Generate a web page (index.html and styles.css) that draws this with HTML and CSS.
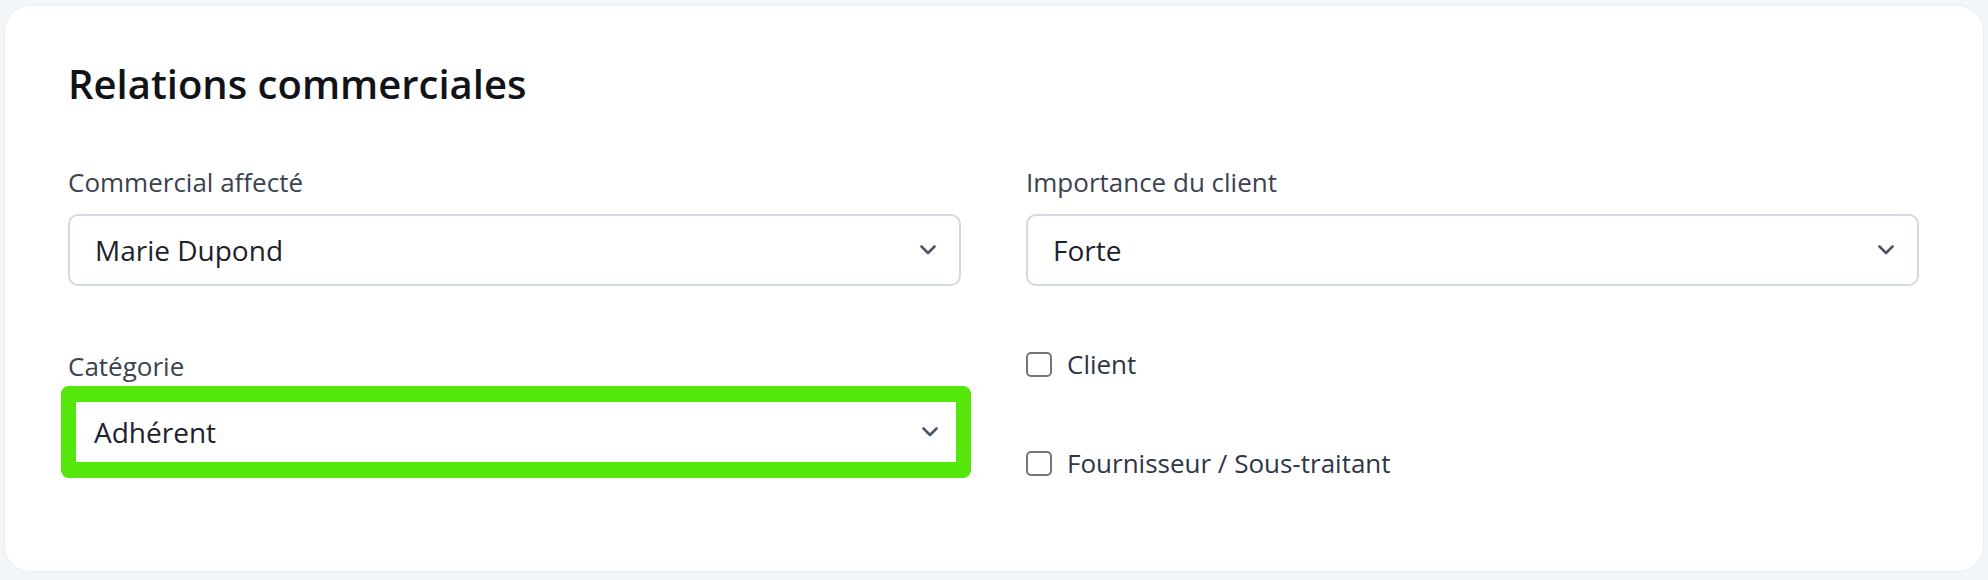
FILE: index.html
```html
<!DOCTYPE html>
<html lang="fr">
<head>
<meta charset="utf-8">
<title>Relations commerciales</title>
<link rel="stylesheet" href="styles.css">
</head>
<body>
<section class="card">
  <h2 class="title">Relations commerciales</h2>
  <div class="grid">
    <div class="field">
      <label class="label">Commercial affecté</label>
      <div class="select">
        <span class="value">Marie Dupond</span>
        <svg class="chev" width="16" height="10" viewBox="0 0 16 10"><polyline points="1.5,1.5 8,8 14.5,1.5" fill="none" stroke="#4b5567" stroke-width="2.6" stroke-linecap="round" stroke-linejoin="round"/></svg>
      </div>
    </div>
    <div class="field">
      <label class="label">Importance du client</label>
      <div class="select">
        <span class="value">Forte</span>
        <svg class="chev" width="16" height="10" viewBox="0 0 16 10"><polyline points="1.5,1.5 8,8 14.5,1.5" fill="none" stroke="#4b5567" stroke-width="2.6" stroke-linecap="round" stroke-linejoin="round"/></svg>
      </div>
    </div>
    <div class="field">
      <label class="label">Catégorie</label>
      <div class="select focused">
        <span class="value">Adhérent</span>
        <svg class="chev" width="16" height="10" viewBox="0 0 16 10"><polyline points="1.5,1.5 8,8 14.5,1.5" fill="none" stroke="#4b5567" stroke-width="2.6" stroke-linecap="round" stroke-linejoin="round"/></svg>
      </div>
    </div>
    <div class="checks">
      <label class="check"><span class="box"></span><span>Client</span></label>
      <label class="check"><span class="box"></span><span>Fournisseur / Sous-traitant</span></label>
    </div>
  </div>
</section>
</body>
</html>
```
FILE: styles.css
```css
html, body {
  margin: 0;
  padding: 0;
}
body {
  background: #f3f6f9;
  font-family: "Open Sans", "Noto Sans", sans-serif;
  width: 1988px;
  height: 580px;
  overflow: hidden;
}
.card {
  box-sizing: border-box;
  margin: 5px 4px 0 4px;
  height: 567px;
  background: #ffffff;
  border: 1px solid #e9eef4;
  border-radius: 26px;
  padding: 52px 63px 0 63px;
}
.title {
  margin: 0;
  font-size: 40px;
  line-height: 52px;
  font-weight: 600;
  color: #111318;
}
.grid {
  margin-top: 56px;
  display: grid;
  grid-template-columns: 893px 893px;
  column-gap: 65px;
  row-gap: 64px;
}
.field {
  display: flex;
  flex-direction: column;
}
.label {
  font-size: 26px;
  line-height: 32px;
  color: #3b4250;
}
.select {
  box-sizing: border-box;
  margin-top: 16px;
  height: 72px;
  border: 2px solid #d3d9e2;
  border-radius: 10px;
  display: flex;
  align-items: center;
  justify-content: space-between;
  padding: 0 23px 0 25px;
}
.value {
  font-size: 28px;
  line-height: 38px;
  color: #1d222c;
}
.select.focused {
  margin: 4px -10px 0 -7px;
  height: 92px;
  border: 15px solid #55e60b;
  border-top-width: 16px;
  border-bottom-width: 16px;
  border-radius: 8px;
  padding: 0 18px 0 18px;
}
.checks {
  display: flex;
  flex-direction: column;
  gap: 67px;
  margin-top: -2px;
}
.check {
  display: flex;
  align-items: center;
  gap: 15px;
  font-size: 26px;
  line-height: 32px;
  color: #2e3546;
}
.box {
  box-sizing: border-box;
  width: 26px;
  height: 25px;
  border: 2px solid #767676;
  border-radius: 5px;
  background: #fff;
}
```
